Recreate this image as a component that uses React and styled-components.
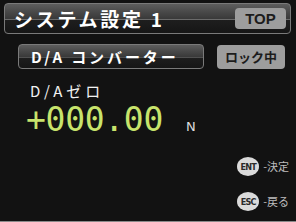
import styled, { createGlobalStyle } from "styled-components";

const Global = createGlobalStyle`
  html, body {
    margin: 0;
    padding: 0;
    background: #111;
  }
`;

const Screen = styled.div`
  width: 296px;
  height: 222px;
  box-sizing: border-box;
  background: #121212;
  border-bottom: 1px solid #8a8a8a;
  display: flex;
  flex-direction: column;
  font-family: "Noto Sans CJK JP", "Noto Sans", sans-serif;
  color: #fff;
  overflow: hidden;
`;

const glossy = `
  box-sizing: border-box;
  border: 1px solid #7a7a7a;
  border-radius: 4px;
  background: linear-gradient(
    to bottom,
    #5e5e5e 0%,
    #474747 30%,
    #3a3a3a 50%,
    #6a6a6a 51%,
    #6a6a6a 54%,
    #1e1e1e 55%,
    #161616 100%
  );
`;

const Header = styled.div`
  ${glossy}
  margin: 3px 5px 0 4px;
  height: 31px;
  display: flex;
  align-items: center;
  justify-content: space-between;
  padding: 0 4px 0 9px;
`;

const Title = styled.h1`
  margin: 0;
  font-size: 19px;
  font-weight: 700;
  letter-spacing: 2.7px;
  line-height: 1;
  white-space: pre;
`;

const GrayButton = styled.div`
  box-sizing: border-box;
  background: #9d9d9d;
  border-radius: 4px;
  color: #1c1c1c;
  font-weight: 700;
  display: flex;
  align-items: center;
  justify-content: center;
  width: ${(p) => p.$w}px;
  height: ${(p) => p.$h}px;
  font-size: ${(p) => p.$size}px;
  font-family: ${(p) =>
    p.$latin ? `"Liberation Sans", Arial, sans-serif` : `"Noto Sans CJK JP", sans-serif`};
  line-height: 1;
`;

const Row = styled.div`
  display: flex;
  align-items: center;
  margin: 10px 11px 0 18px;
`;

const ModeBar = styled.div`
  ${glossy}
  width: 186px;
  height: 25px;
  display: flex;
  align-items: center;
  padding-left: 12px;
  font-size: 15px;
  font-weight: 700;
  letter-spacing: 2.9px;
  line-height: 1;
`;

const Spacer = styled.div`
  flex: 1;
`;

const Body = styled.div`
  padding: 12px 0 0 30px;
`;

const Label = styled.div`
  font-size: 15px;
  letter-spacing: 4px;
  line-height: 20px;
  color: #f2f2f2;
`;

const ValueRow = styled.div`
  display: flex;
  align-items: baseline;
  margin-top: 1px;
`;

const Value = styled.div`
  font-family: "DejaVu Sans Mono", monospace;
  font-size: 33px;
  color: #c8e46c;
  line-height: 36px;
  margin-left: -4px;
  letter-spacing: -0.3px;
`;

const Unit = styled.div`
  font-family: "DejaVu Sans", sans-serif;
  font-size: 13px;
  color: #dcdcdc;
  margin-left: 23px;
`;

const Keys = styled.div`
  display: flex;
  flex-direction: column;
  gap: 16px;
  align-self: flex-end;
  margin: 19px 7px 0 0;
`;

const KeyRow = styled.div`
  display: flex;
  align-items: center;
`;

const KeyCap = styled.div`
  width: 22px;
  height: 19px;
  border-radius: 50%;
  background: #dadada;
  color: #2a2a2a;
  font-family: "DejaVu Sans Condensed", "DejaVu Sans", sans-serif;
  font-weight: 700;
  font-size: 9px;
  letter-spacing: -0.8px;
  display: flex;
  align-items: center;
  justify-content: center;
`;

const KeyText = styled.span`
  margin-left: 4px;
  font-size: 11px;
  color: #bdbdbd;
  line-height: 1;
`;

export default function App() {
  return (
    <>
      <Global />
      <Screen>
        <Header>
          <Title>{"システム設定 1"}</Title>
          <GrayButton $w={51} $h={21} $size={15} $latin>
            TOP
          </GrayButton>
        </Header>
        <Row>
          <ModeBar>D/A コンバーター</ModeBar>
          <Spacer />
          <GrayButton $w={68} $h={24} $size={13}>
            ロック中
          </GrayButton>
        </Row>
        <Body>
          <Label>D/Aゼロ</Label>
          <ValueRow>
            <Value>+000.00</Value>
            <Unit>N</Unit>
          </ValueRow>
        </Body>
        <Keys>
          <KeyRow>
            <KeyCap>ENT</KeyCap>
            <KeyText>-決定</KeyText>
          </KeyRow>
          <KeyRow>
            <KeyCap>ESC</KeyCap>
            <KeyText>-戻る</KeyText>
          </KeyRow>
        </Keys>
      </Screen>
    </>
  );
}
